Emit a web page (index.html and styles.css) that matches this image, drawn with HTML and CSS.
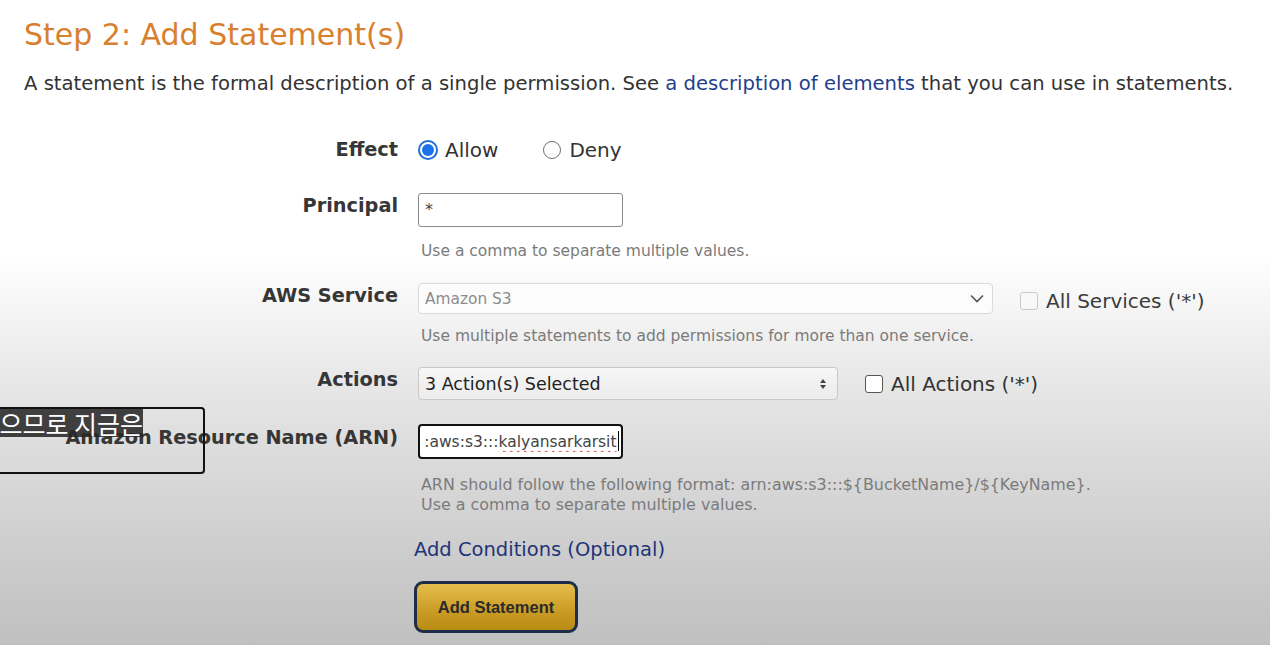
FILE: index.html
```html
<!DOCTYPE html>
<html lang="en">
<head>
<meta charset="utf-8">
<title>Add Statement(s)</title>
<link rel="stylesheet" href="styles.css">
</head>
<body>
<div class="page">
  <h2 class="title">Step 2: Add Statement(s)</h2>
  <p class="intro">A statement is the formal description of a single permission. See <a class="link" href="#">a description of elements</a> that you can use in statements.</p>

  <div class="form">
    <div class="row row-effect">
      <div class="label">Effect</div>
      <div class="cell">
        <div class="radios">
          <label class="radio-opt"><span class="radio checked"></span>Allow</label>
          <label class="radio-opt"><span class="radio"></span>Deny</label>
        </div>
      </div>
    </div>

    <div class="row row-principal">
      <div class="label">Principal</div>
      <div class="cell">
        <div class="input small">*</div>
        <div class="help">Use a comma to separate multiple values.</div>
      </div>
    </div>

    <div class="row row-service">
      <div class="label">AWS Service</div>
      <div class="cell">
        <div class="line">
          <div class="select service">
            <span class="sel-text muted">Amazon S3</span>
            <svg class="chev" width="14" height="9" viewBox="0 0 14 9"><path d="M1 1.5 L7 7.5 L13 1.5" fill="none" stroke="#555" stroke-width="1.6"/></svg>
          </div>
          <label class="check-opt faded"><span class="checkbox"></span>All Services ('*')</label>
        </div>
        <div class="help">Use multiple statements to add permissions for more than one service.</div>
      </div>
    </div>

    <div class="row row-actions">
      <div class="label">Actions</div>
      <div class="cell">
        <div class="line">
          <div class="select actions">
            <span class="sel-text">3 Action(s) Selected</span>
            <svg class="updown" width="8" height="12" viewBox="0 0 8 12"><path d="M4 1 L7 5 L1 5 Z M4 11 L7 7 L1 7 Z" fill="#444"/></svg>
          </div>
          <label class="check-opt"><span class="checkbox dark"></span>All Actions ('*')</label>
        </div>
      </div>
    </div>

    <div class="row row-arn">
      <div class="label">Amazon Resource Name (ARN)</div>
      <div class="cell">
        <div class="input small focused"><div class="arn-clip"><span class="arn-text">arn:aws:s3:::<span class="spell">kalyansarkarsit</span><span class="caret"></span></span></div></div>
        <div class="help two">ARN should follow the following format: arn:aws:s3:::${BucketName}/${KeyName}.<br>Use a comma to separate multiple values.</div>
      </div>
    </div>

    <div class="row row-cond">
      <div></div>
      <div class="cell">
        <a class="cond" href="#">Add Conditions (Optional)</a>
        <button class="btn">Add Statement</button>
      </div>
    </div>
  </div>
</div>

<div class="caption-box"><span class="caption">으므로 지금은</span></div>
</body>
</html>
```

FILE: styles.css
```css
html, body {
  margin: 0;
  padding: 0;
}
body {
  width: 1270px;
  height: 645px;
  overflow: hidden;
  position: relative;
  font-family: "DejaVu Sans", Verdana, sans-serif;
  color: #333;
  background: linear-gradient(to bottom, #ffffff 0px, #ffffff 255px, #ebebeb 360px, #d9d9d9 470px, #c6c6c6 600px, #c0c0c0 645px);
}
.page {
  padding: 0 0 0 24px;
}
.title {
  margin: 0;
  padding-top: 16px;
  font-size: 30px;
  font-weight: normal;
  color: #d8802f;
  line-height: 38px;
}
.intro {
  margin: 18px 0 0 0;
  font-size: 19.6px;
  line-height: 24px;
  color: #333;
}
.link {
  color: #1f3f8e;
  text-decoration: none;
}
.form {
  margin-left: -24px;
}
.row {
  display: grid;
  grid-template-columns: 398px 1fr;
  column-gap: 20px;
  align-items: start;
}
.label {
  text-align: right;
  font-weight: bold;
  font-size: 19.3px;
  color: #363636;
  line-height: 26px;
}
.cell {
  display: flex;
  flex-direction: column;
  align-items: flex-start;
}
.line {
  display: flex;
  align-items: center;
}
.row-effect { margin-top: 38px; }
.row-effect .label { line-height: 32px; }
.radios {
  display: flex;
  align-items: center;
  height: 32px;
}
.radio-opt {
  display: flex;
  align-items: center;
  font-size: 20px;
  color: #333;
  margin-right: 45px;
}
.radio {
  width: 18px;
  height: 18px;
  border: 1.5px solid #6e6e6e;
  border-radius: 50%;
  margin-right: 8px;
  box-sizing: border-box;
  background: #fff;
  position: relative;
}
.radio.checked {
  border: 2px solid #1a6fd8;
  width: 20px;
  height: 20px;
  margin-right: 7px;
}
.radio.checked::after {
  content: "";
  position: absolute;
  left: 2px;
  top: 2px;
  width: 12px;
  height: 12px;
  border-radius: 50%;
  background: #1a73e8;
}
.row-principal { margin-top: 27px; }
.input {
  box-sizing: border-box;
  height: 34px;
  border: 1px solid #8a8a8a;
  border-radius: 3px;
  background: #fff;
  font-size: 16px;
  color: #444;
  padding: 7px 6px;
  line-height: 18px;
}
.input.small { width: 205px; }
.help {
  margin-top: 14px;
  padding-left: 3px;
  font-size: 15.5px;
  color: #7b7b7b;
  line-height: 20px;
}
.row-service { margin-top: 22px; }
.select {
  box-sizing: border-box;
  display: flex;
  align-items: center;
  justify-content: space-between;
  border: 1px solid #dadada;
  border-radius: 4px;
  background: #fcfcfc;
  padding: 0 8px 0 6px;
}
.select.service {
  width: 575px;
  height: 31px;
}
.sel-text { font-size: 16px; color: #333; }
.sel-text.muted { color: #8c8c8c; font-size: 15.4px; }
.check-opt {
  display: flex;
  align-items: center;
  font-size: 20px;
  color: #333;
  margin-left: 27px;
}
.check-opt.faded { color: #3c3c3c; }
.row-service .check-opt { margin-top: 4px; }
.checkbox {
  box-sizing: border-box;
  width: 18px;
  height: 18px;
  border: 1.5px solid #c9c9c9;
  border-radius: 3px;
  background: #f8f8f8;
  margin-right: 8px;
}
.checkbox.dark { border-color: #555; background: #fff; }
.row-service .help { margin-top: 12px; }
.row-actions { margin-top: 21px; }
.select.actions {
  width: 420px;
  height: 33px;
  background: linear-gradient(#f6f6f6, #ececec);
  border-color: #c8c8c8;
}
.select.actions .sel-text { font-size: 17.5px; color: #222; }
.select.actions .updown { margin-right: 2px; }
.row-actions .check-opt { margin-left: 27px; }
.row-arn { margin-top: 24px; }
.row-arn .label { line-height: 28px; }
.input.focused {
  border: 2px solid #111;
  border-radius: 4px;
  height: 35px;
  padding: 5px 2px 6px 4px;
}
.arn-clip {
  display: flex;
  justify-content: flex-end;
  overflow: hidden;
  white-space: nowrap;
  width: 100%;
}
.arn-text {
  font-size: 15.5px;
  color: #444;
  line-height: 20px;
  flex-shrink: 0;
}
.spell {
  text-decoration: underline wavy #d6383a;
  text-decoration-thickness: 1px;
  text-underline-offset: 3px;
}
.caret {
  display: inline-block;
  width: 1.5px;
  height: 20px;
  background: #000;
  vertical-align: -4px;
  margin-left: 1px;
}
.help.two { margin-top: 16px; font-size: 15.9px; }
.row-cond { margin-top: 22px; }
.row-cond .cell { margin-left: -4px; }
.cond {
  font-size: 19.5px;
  color: #1f3477;
  text-decoration: none;
  line-height: 26px;
}
.btn {
  margin-top: 18px;
  width: 164px;
  height: 52px;
  border: 3px solid #1f2d4a;
  border-radius: 9px;
  background: linear-gradient(#e6bd4d, #c99b24 60%, #b98c14);
  font-family: "Liberation Sans", Arial, sans-serif;
  font-weight: bold;
  font-size: 16.5px;
  color: #2a2a2a;
  padding: 0;
}
.caption-box {
  position: absolute;
  left: -10px;
  top: 407px;
  width: 211px;
  height: 63px;
  border: 2px solid #111;
  border-radius: 4px;
}
.caption {
  position: absolute;
  left: 8px;
  top: 0;
  height: 28px;
  width: 143px;
  background: rgba(40, 40, 40, 0.88);
  color: #fff;
  font-family: "Noto Sans CJK KR", "Noto Sans", sans-serif;
  font-size: 25px;
  line-height: 28px;
  white-space: nowrap;
  overflow: hidden;
  display: flex;
  justify-content: flex-end;
}
```
